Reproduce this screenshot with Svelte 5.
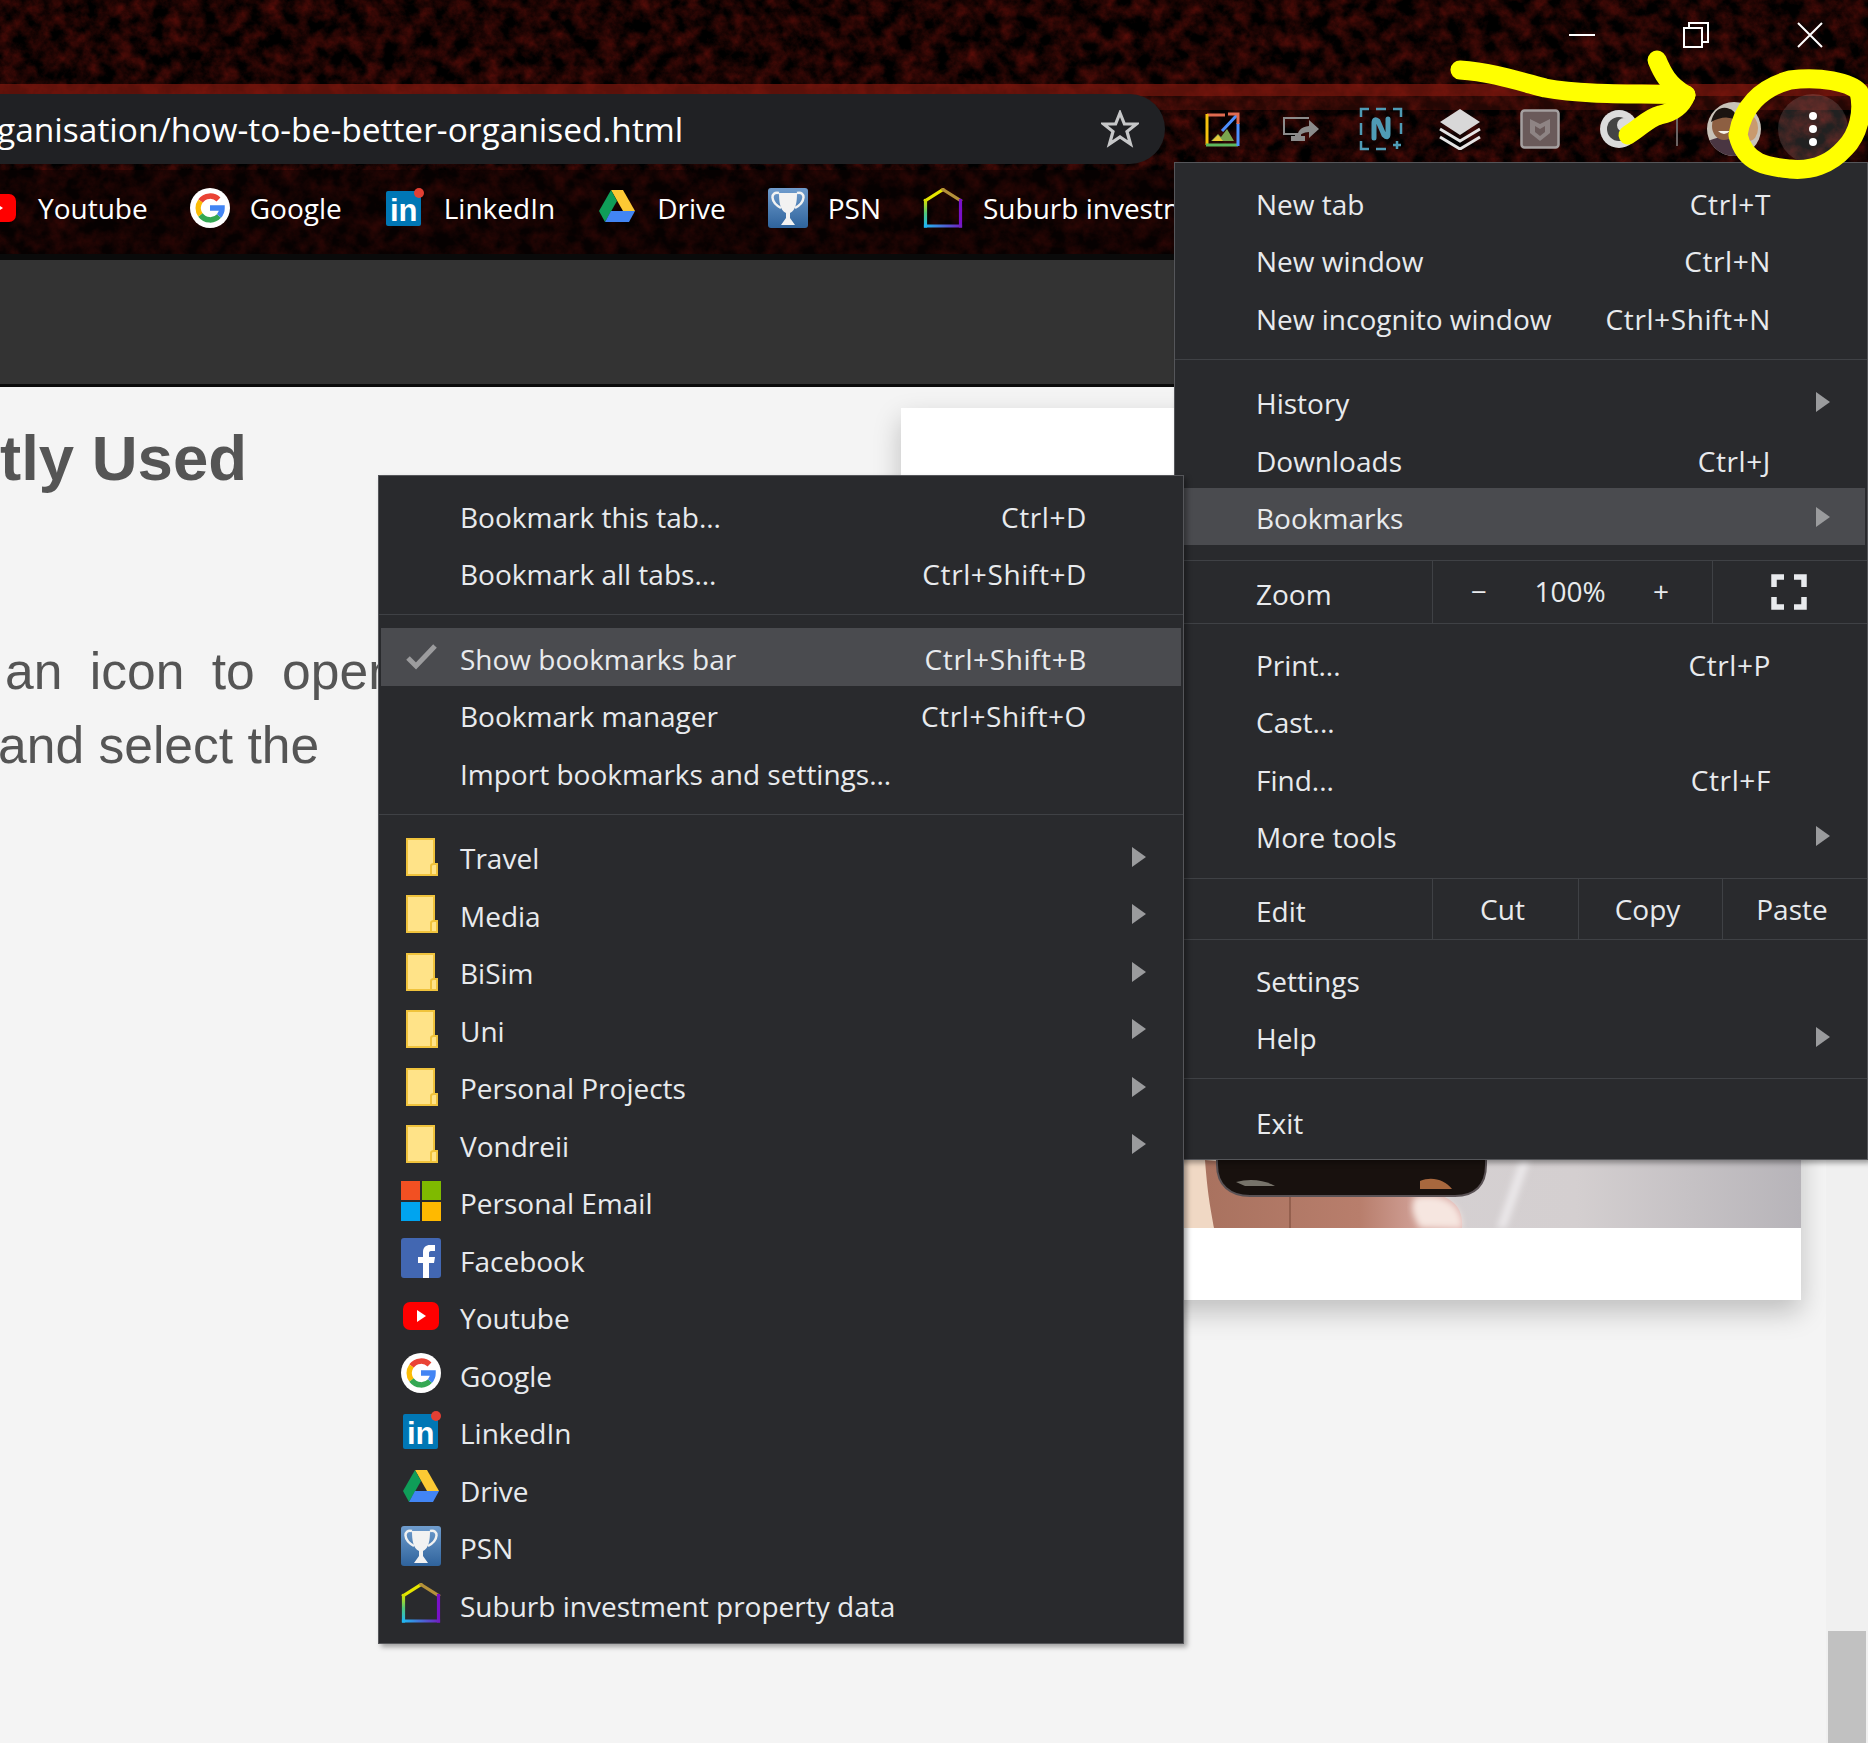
<script>
	const bar = [
		{ icon: 'youtube', label: 'Youtube' },
		{ icon: 'google', label: 'Google' },
		{ icon: 'linkedin', label: 'LinkedIn' },
		{ icon: 'drive', label: 'Drive' },
		{ icon: 'psn', label: 'PSN' },
		{ icon: 'house', label: 'Suburb investment property data' }
	];

	const folders = ['Travel', 'Media', 'BiSim', 'Uni', 'Personal Projects', 'Vondreii'];

	const links = [
		{ icon: 'ms', label: 'Personal Email' },
		{ icon: 'facebook', label: 'Facebook' },
		...bar
	];
</script>

{#snippet arrow()}
	<svg class="arrow" width="14" height="20" viewBox="0 0 14 20"><path d="M0 0 14 10 0 20z" fill="#9a9b9d" /></svg>
{/snippet}

{#snippet row(label, keys, sub)}
	<div class="row">
		<span class="label">{label}</span>
		{#if keys}<span class="keys">{keys}</span>{/if}
		{#if sub}{@render arrow()}{/if}
	</div>
{/snippet}

{#snippet favicon(name)}
	<svg class="fav" width="40" height="40" viewBox="0 0 40 40">
		{#if name === 'ms'}
			<rect width="19" height="19" fill="#f25022" />
			<rect x="21" width="19" height="19" fill="#7fba00" />
			<rect y="21" width="19" height="19" fill="#00a4ef" />
			<rect x="21" y="21" width="19" height="19" fill="#ffb900" />
		{:else if name === 'facebook'}
			<rect width="40" height="40" rx="3" fill="#4267b2" />
			<path d="M22 40V25H17V19H22V14C22 9.500 25 7 29 7H34V13H30C28.500 13 28 14 28 15V19H34L33 25H28V40z" fill="#fff" />
		{:else if name === 'youtube'}
			<rect x="2" y="6" width="36" height="28" rx="7" fill="#f00" />
			<path d="M16 14 25 20 16 26z" fill="#fff" />
		{:else if name === 'google'}
			<circle cx="20" cy="20" r="20" fill="#fff" />
			<g fill="none" stroke-width="5.500">
				<path d="M28.500 11.500A12 12 0 0 0 10.500 13" stroke="#ea4335" />
				<path d="M10.500 13A12 12 0 0 0 10.500 27" stroke="#fbbc05" />
				<path d="M10.500 27A12 12 0 0 0 29 28" stroke="#34a853" />
				<path d="M29 28A12 12 0 0 0 32 20H20" stroke="#4285f4" />
			</g>
		{:else if name === 'linkedin'}
			<rect x="2" y="3" width="35" height="35" rx="2" fill="#0077b5" />
			<text x="6" y="33" class="li-in">in</text>
			<circle cx="35" cy="5" r="5" fill="#e23f33" />
		{:else if name === 'drive'}
			<path d="M14 2H26L38 23H26z" fill="#fcc934" />
			<path d="M14 2 2 23 8 34 20 13z" fill="#0f9d58" />
			<path d="M8 34H32L38 23H14z" fill="#4285f4" />
		{:else if name === 'psn'}
			<rect width="40" height="40" rx="3" fill="url(#psnBg)" />
			<path d="M11 5H29C29 14 28 22 22 25V30L27 37H13L18 30V25C12 22 11 14 11 5z" fill="#f2f2f2" />
			<path d="M11 5C2 3 2 14 13 20M29 5C38 3 38 14 27 20" fill="none" stroke="#f2f2f2" stroke-width="2.500" />
		{:else if name === 'house'}
			<g fill="none" stroke-width="3.200" stroke-linecap="square">
				<path d="M2.500 12.500 20 1.500" stroke="#e6e600" />
				<path d="M20 1.500 37.500 12.500" stroke="#b5913a" />
				<path d="M37.500 12.500V38" stroke="#7a10c8" />
				<path d="M2.500 12.500V38" stroke="url(#houseLeft)" />
				<path d="M2.500 38H37.500" stroke="url(#houseBase)" />
			</g>
		{/if}
	</svg>
{/snippet}

{#snippet folder()}
	<svg class="folder" width="40" height="40" viewBox="0 0 40 40">
		<path d="M6 3H33V28H36V39H6z" fill="#ffe388" stroke="#f0c33c" stroke-width="2" />
		<path d="M30 39V30Q30 28 33 28" fill="none" stroke="#f0c33c" stroke-width="2" />
	</svg>
{/snippet}

<div class="page">
	<svg class="defs" width="0" height="0">
		<defs>
			<linearGradient id="psnBg" x1="0" y1="0" x2="0" y2="1">
				<stop offset="0" stop-color="#6f9ccd" />
				<stop offset="1" stop-color="#2f639c" />
			</linearGradient>
			<linearGradient id="houseLeft" gradientUnits="userSpaceOnUse" x1="0" y1="12" x2="0" y2="38">
				<stop offset="0" stop-color="#d8e000" />
				<stop offset=".5" stop-color="#50c878" />
				<stop offset="1" stop-color="#20b8f0" />
			</linearGradient>
			<linearGradient id="houseBase" gradientUnits="userSpaceOnUse" x1="2" y1="0" x2="38" y2="0">
				<stop offset="0" stop-color="#20b8f0" />
				<stop offset="1" stop-color="#7020c0" />
			</linearGradient>
			<filter id="grain" x="0" y="0" width="100%" height="100%" color-interpolation-filters="sRGB">
				<feTurbulence type="fractalNoise" baseFrequency="0.06" numOctaves="6" seed="7" />
				<feColorMatrix values="0.550 0 0 0 -0.170  0.080 0 0 0 -0.025  0.050 0 0 0 -0.015  0 0 0 0 1" />
			</filter>
		</defs>
	</svg>

	<header class="frame">
		<svg class="texture" width="1868" height="254">
			<rect width="1868" height="254" filter="url(#grain)" />
			<rect y="84" width="1868" height="12" fill="#8a1a10" opacity=".65" />
			<rect y="96" width="1868" height="14" fill="#8a1a10" opacity=".25" />
			<rect y="170" width="1868" height="84" fill="#0c0101" opacity=".5" />
		</svg>

		<div class="titlebar">
			<div class="winbtn">
				<svg width="26" height="26" viewBox="0 0 26 26"><path d="M0 13H26" stroke="#fff" stroke-width="2" /></svg>
			</div>
			<div class="winbtn">
				<svg width="26" height="26" viewBox="0 0 26 26" fill="none" stroke="#fff" stroke-width="2"><rect x="1" y="6" width="18" height="19" /><path d="M6 6V1H25V20H19" /></svg>
			</div>
			<div class="winbtn">
				<svg width="26" height="26" viewBox="0 0 26 26"><path d="M1 1 25 25M25 1 1 25" stroke="#fff" stroke-width="2" /></svg>
			</div>
		</div>

		<div class="toolbar">
			<div class="omnibox">
				<span class="url">ganisation/how-to-be-better-organised.html</span>
				<svg width="38" height="38" viewBox="0 0 38 38"><path d="M19 3 23.400 14H35.500L26 21.500 29.500 34 19 27 8.500 34 12 21.500 2.500 14H14.600z" fill="none" stroke="#c6c7c8" stroke-width="3.200" /></svg>
			</div>

			<div class="ext">
				<svg width="40" height="40" viewBox="0 0 40 40" fill="none" stroke-width="3">
					<path d="M23 6H5" stroke="#e06a50" /><path d="M5 5V36" stroke="#f4c20d" /><path d="M4 36H36" stroke="#5cb85c" /><path d="M36 37V14" stroke="#4d90fe" />
					<path d="M20 22 35 6" stroke="#4d90fe" /><path d="M26 5H36V15" stroke="#e06a50" />
					<path d="M9 32 16 25 19 28 25 20 32 32z" fill="#7aa64e" stroke="none" /><path d="M10 32 16 26 21 32z" fill="#e8c83a" stroke="none" />
				</svg>
			</div>
			<div class="ext">
				<svg width="40" height="40" viewBox="0 0 40 40" fill="#8b8b8b">
					<path d="M2 8H28V10H4V24H20V27H24V32H10V27H14V26H2z" />
					<path d="M16 30Q16 18 28 17V11L38 20 28 29V23Q20 23 16 30z" />
				</svg>
			</div>
			<div class="ext">
				<svg width="44" height="44" viewBox="0 0 44 44" fill="none" stroke="#4f9bb5" stroke-width="2.500">
					<path d="M2 10V2H10M17 2H27M34 2H42V10M42 16V27M2 16V28M2 34V42H10M17 42H27" />
					<path d="M34 38H42M38 34V42" />
					<path d="M15 31V16Q15 11 19 14L25 28Q29 32 29 27V12" stroke-width="5" stroke-linecap="round" />
				</svg>
			</div>
			<div class="ext">
				<svg width="42" height="42" viewBox="0 0 42 42">
					<path d="M21 1 41 14 21 27 1 14z" fill="#d8d8d8" />
					<path d="M1 21 21 33 41 21M1 29 21 41 41 29" fill="none" stroke="#e4e4e4" stroke-width="3" />
				</svg>
			</div>
			<div class="ext">
				<svg width="40" height="40" viewBox="0 0 40 40">
					<rect x="1.500" y="1.500" width="37" height="37" rx="3" fill="#6a5a5a" stroke="#a5a0a0" stroke-width="2.500" />
					<path d="M10 10 20 15 30 10V24L20 32 10 24z" fill="#8e8484" />
					<path d="M15 17 20 20 25 17V23L20 27 15 23z" fill="#6a5a5a" />
				</svg>
			</div>
			<div class="ext">
				<svg width="40" height="40" viewBox="0 0 40 40">
					<circle cx="20" cy="20" r="19" fill="#dcdcdc" />
					<circle cx="20" cy="20" r="12" fill="#444" />
					<circle cx="25" cy="16" r="7" fill="#dcdcdc" />
				</svg>
			</div>
			<div class="tool-divider"></div>
			<div class="avatar">
				<svg width="54" height="54" viewBox="0 0 54 54">
					<rect width="54" height="54" fill="#c8c2b8" />
					<path d="M0 40Q16 30 30 42V54H0z" fill="#4a3642" />
					<ellipse cx="17" cy="24" rx="12" ry="14" fill="#8d5f42" />
					<path d="M4 20Q8 4 20 6 30 8 29 18 18 12 4 20z" fill="#1c1410" />
					<path d="M11 29Q17 35 23 29z" fill="#f5f0e8" />
					<ellipse cx="42" cy="26" rx="9" ry="13" fill="#c99a6e" />
				</svg>
			</div>
			<div class="kebab"><i></i><i></i><i></i></div>
		</div>

		<nav class="bookmarks">
			{#each bar as item}
				<div class="mark">
					{@render favicon(item.icon)}
					<span>{item.label}</span>
				</div>
			{/each}
		</nav>
	</header>

	<div class="subbar"></div>

	<main class="content">
		<div class="article">
			<h2>tly Used</h2>
			<p class="wide">an icon to open</p>
			<p class="shifted">and select the</p>
		</div>
		<section class="card">
			<div class="card-top"></div>
			<svg class="photo" viewBox="901 500 900 728" preserveAspectRatio="none">
				<defs>
					<linearGradient id="wall" x1="0" y1="0" x2="1" y2="0">
						<stop offset="0" stop-color="#d8d4d8" />
						<stop offset=".75" stop-color="#d4cfd0" />
						<stop offset="1" stop-color="#b7b4b9" />
					</linearGradient>
					<linearGradient id="thumb" x1="0" y1="0" x2="1" y2="0">
						<stop offset="0" stop-color="#a9725f" />
						<stop offset=".6" stop-color="#b87e6c" />
						<stop offset="1" stop-color="#e2b9b6" />
					</linearGradient>
					<filter id="soft"><feGaussianBlur stdDeviation="3" /></filter>
				</defs>
				<rect x="901" y="500" width="900" height="728" fill="url(#wall)" />
				<path d="M1497 1228 1520 1160H1530L1506 1228z" fill="#ebe8ea" filter="url(#soft)" />
				<path d="M1184 1160H1216V1228H1184z" fill="#f0d8c4" />
				<path d="M1205 1160C1208 1200 1212 1215 1214 1228H1462C1464 1205 1450 1195 1420 1190L1300 1170z" fill="url(#thumb)" />
				<path d="M1415 1197C1445 1192 1462 1205 1462 1228H1420C1412 1215 1410 1205 1415 1197z" fill="#f6e6e0" filter="url(#soft)" />
				<path d="M1290 1195V1228" stroke="#7a4a3a" stroke-width="1.500" opacity=".7" />
				<path d="M1217 1150H1486V1165C1486 1185 1475 1196 1455 1196H1250C1230 1196 1217 1185 1217 1165z" fill="#18110e" stroke="#5a5255" stroke-width="2" />
				<path d="M1420 1181C1432 1176 1445 1180 1452 1189H1420z" fill="#a8683e" />
				<path d="M1236 1182C1250 1178 1265 1180 1275 1186H1245z" fill="#77736a" />
			</svg>
			<div class="card-foot"></div>
		</section>
		<div class="scrollbar"><div class="thumb"></div></div>
	</main>

	<div class="menu main-menu">
		{@render row('New tab', 'Ctrl+T')}
		{@render row('New window', 'Ctrl+N')}
		{@render row('New incognito window', 'Ctrl+Shift+N')}
		<hr class="sep" />
		{@render row('History', '', true)}
		{@render row('Downloads', 'Ctrl+J')}
		<div class="row active">
			<span class="label">Bookmarks</span>
			{@render arrow()}
		</div>
		<hr class="sep zoom-sep" />
		<div class="cells zoom">
			<span class="label">Zoom</span>
			<div class="steppers">
				<span>−</span>
				<span>100%</span>
				<span>+</span>
			</div>
			<div class="fullscreen">
				<svg width="36" height="36" viewBox="0 0 36 36" fill="none" stroke="#e8eaed" stroke-width="5.500"><path d="M3 13V3H13M23 3H33V13M3 23V33H13M23 33H33V23" /></svg>
			</div>
		</div>
		<hr class="sep tight" />
		{@render row('Print...', 'Ctrl+P')}
		{@render row('Cast...')}
		{@render row('Find...', 'Ctrl+F')}
		{@render row('More tools', '', true)}
		<hr class="sep edit-sep" />
		<div class="cells edit">
			<span class="label">Edit</span>
			<div class="edit-btn">Cut</div>
			<div class="edit-btn">Copy</div>
			<div class="edit-btn">Paste</div>
		</div>
		<hr class="sep tight" />
		{@render row('Settings')}
		{@render row('Help', '', true)}
		<hr class="sep" />
		{@render row('Exit')}
	</div>

	<div class="menu bookmarks-menu">
		{@render row('Bookmark this tab...', 'Ctrl+D')}
		{@render row('Bookmark all tabs...', 'Ctrl+Shift+D')}
		<hr class="sep" />
		<div class="row active">
			<svg class="check" width="40" height="40" viewBox="0 0 40 40"><path d="M7 22 15 30 34 10" fill="none" stroke="#9c9c9e" stroke-width="5" /></svg>
			<span class="label">Show bookmarks bar</span>
			<span class="keys">Ctrl+Shift+B</span>
		</div>
		{@render row('Bookmark manager', 'Ctrl+Shift+O')}
		{@render row('Import bookmarks and settings...')}
		<hr class="sep" />
		{#each folders as name}
			<div class="row">
				{@render folder()}
				<span class="label">{name}</span>
				{@render arrow()}
			</div>
		{/each}
		{#each links as link}
			<div class="row">
				{@render favicon(link.icon)}
				<span class="label">{link.label}</span>
			</div>
		{/each}
	</div>

	<svg class="scribble" width="1874" height="200" viewBox="0 0 1874 200" fill="none" stroke="#ffff00" stroke-width="19" stroke-linecap="round" stroke-linejoin="round">
		<path d="M1460 70C1490 72 1515 80 1545 88 1590 96 1640 93 1686 95" />
		<path d="M1657 60C1662 72 1668 85 1686 95 1682 105 1675 112 1660 115 1648 118 1640 128 1628 135" />
		<path d="M1738 135C1742 108 1760 88 1790 80 1820 76 1850 82 1859 92 1864 112 1858 135 1845 148 1830 165 1810 171 1790 169 1770 167 1745 165 1738 135z" />
	</svg>
</div>

<style>
	:global(body) {
		margin: 0;
		background: #fff;
	}

	.page {
		position: relative;
		width: 1868px;
		height: 1743px;
		overflow: hidden;
		font-family: 'Open Sans', 'Liberation Sans', sans-serif;
	}

	.defs {
		position: absolute;
	}

	/* browser chrome */
	.frame {
		position: relative;
		height: 254px;
		background: #150303;
		border-bottom: 6px solid #0a0a0a;
		overflow: hidden;
	}

	.texture {
		position: absolute;
		left: 0;
		top: 0;
	}

	.titlebar,
	.toolbar,
	.bookmarks {
		position: relative;
		display: flex;
		align-items: center;
	}

	.titlebar {
		height: 84px;
		justify-content: flex-end;
		align-items: flex-start;
		padding-right: 1px;
		box-sizing: border-box;
	}

	.winbtn {
		width: 114px;
		height: 70px;
		display: flex;
		align-items: center;
		justify-content: center;
	}

	.toolbar {
		height: 70px;
		margin-top: 10px;
	}

	.omnibox {
		width: 1165px;
		height: 70px;
		flex: none;
		display: flex;
		align-items: center;
		justify-content: space-between;
		box-sizing: border-box;
		padding-right: 26px;
		background: #202124;
		border-radius: 0 35px 35px 0;
		margin-right: 17px;
	}

	.url {
		color: #fff;
		font-size: 33.500px;
		margin-left: -3px;
	}

	.ext {
		width: 79.500px;
		display: flex;
		justify-content: center;
	}

	.tool-divider {
		width: 2px;
		height: 34px;
		background: #6b6363;
		margin-left: 17px;
	}

	.avatar {
		width: 54px;
		height: 54px;
		border-radius: 50%;
		overflow: hidden;
		margin-left: 29px;
	}

	.kebab {
		width: 70px;
		height: 70px;
		border-radius: 50%;
		background: rgba(255, 255, 255, 0.13);
		margin-left: 17px;
		display: flex;
		flex-direction: column;
		align-items: center;
		justify-content: center;
		gap: 5px;
	}

	.kebab i {
		width: 8px;
		height: 8px;
		border-radius: 50%;
		background: #fff;
	}

	.bookmarks {
		height: 80px;
		margin-top: 4px;
		margin-left: -22px;
		gap: 42px;
		white-space: nowrap;
		color: #fff;
		font-size: 28px;
	}

	.mark {
		display: flex;
		align-items: center;
		gap: 20px;
	}

	.subbar {
		height: 124px;
		background: #333;
		border-bottom: 3px solid #0a0a0a;
	}

	/* page */
	.content {
		display: flex;
		height: 1356px;
		background: #f4f4f4;
	}

	.article {
		width: 901px;
		flex: none;
		overflow: hidden;
		color: #555;
		font-family: 'Liberation Sans', Arial, sans-serif;
	}

	.article h2 {
		margin: 33px 0 0 0;
		font-size: 63.500px;
		line-height: 76px;
		font-weight: 700;
	}

	.article p {
		margin: 0;
		font-size: 51.600px;
		line-height: 74px;
		white-space: nowrap;
	}

	.wide {
		padding-top: 138px;
		padding-left: 5px;
		word-spacing: 13px;
	}

	.shifted {
		margin-left: -2px !important;
	}

	.card {
		width: 900px;
		height: 892px;
		flex: none;
		margin-top: 21px;
		background: #fff;
		box-shadow: 0 12px 26px rgba(0, 0, 0, 0.22);
		display: flex;
		flex-direction: column;
	}

	.card-top {
		height: 92px;
	}

	.photo {
		display: block;
		width: 900px;
		height: 728px;
	}

	.card-foot {
		height: 72px;
	}

	.scrollbar {
		margin-left: auto;
		width: 42px;
		background: #f0f0f0;
		box-sizing: border-box;
		padding: 1244px 2px 0;
	}

	.thumb {
		height: 112px;
		background: #c1c1c1;
	}

	/* menus */
	.menu {
		position: absolute;
		box-sizing: border-box;
		background: #292a2d;
		color: #e8eaed;
		font-size: 28px;
		border: 1px solid #55565a;
		padding: 10px 2px;
		box-shadow: 3px 3px 5px rgba(0, 0, 0, 0.35);
		white-space: nowrap;
	}

	.main-menu {
		left: 1174px;
		top: 162px;
		width: 694px;
		height: 998px;
	}

	.bookmarks-menu {
		z-index: 2;
		left: 378px;
		top: 475px;
		width: 806px;
		height: 1169px;
	}

	.row {
		position: relative;
		height: 57.500px;
		display: flex;
		align-items: center;
	}

	.main-menu .row {
		padding-left: 79px;
	}

	.bookmarks-menu .row {
		padding-left: 79px;
	}

	.bookmarks-menu .row :global(.fav),
	.bookmarks-menu .row :global(.folder),
	.bookmarks-menu .row .check {
		position: absolute;
		left: 20px;
		top: 8px;
	}

	.active {
		background: #4a4b4f;
	}

	.label {
		flex: 1;
		padding-top: 4px;
	}

	.keys {
		padding-top: 4px;
		letter-spacing: 0.6px;
	}

	.main-menu .keys,
	.bookmarks-menu .keys {
		margin-right: 94px;
	}

	.row :global(.arrow) {
		position: absolute;
		top: 19px;
	}

	.main-menu .row :global(.arrow) {
		right: 35px;
	}

	.bookmarks-menu .row :global(.arrow) {
		right: 35px;
	}

	.sep {
		height: 1px;
		margin: 13px -2px;
		border: 0;
		background: #3f4145;
	}

	.zoom-sep {
		margin: 15px -2px 0;
	}

	.tight {
		margin: 0 -2px 10px;
	}

	.edit-sep {
		margin: 14px -2px 0;
	}

	.cells {
		display: grid;
		align-items: stretch;
		margin: 0 -2px;
	}

	.cells .label {
		padding: 4px 0 0 81px;
		display: flex;
		align-items: center;
	}

	.zoom {
		height: 62px;
		grid-template-columns: 257px 280px 1fr;
	}

	.edit {
		height: 60px;
		grid-template-columns: 257px 146px 144px 1fr;
	}

	.steppers {
		display: grid;
		grid-template-columns: 92px 90px 92px;
		align-items: center;
		text-align: center;
		border-left: 1px solid #3f4145;
		padding-bottom: 3px;
	}

	.fullscreen {
		display: flex;
		align-items: center;
		justify-content: center;
		border-left: 1px solid #3f4145;
		padding-right: 3px;
	}

	.edit-btn {
		display: flex;
		align-items: center;
		justify-content: center;
		border-left: 1px solid #3f4145;
		padding-right: 6px;
	}

	:global(.li-in) {
		font: 700 31px 'Liberation Sans', sans-serif;
		fill: #fff;
	}

	.scribble {
		position: absolute;
		z-index: 3;
		left: 0;
		top: 0;
		pointer-events: none;
	}
</style>
